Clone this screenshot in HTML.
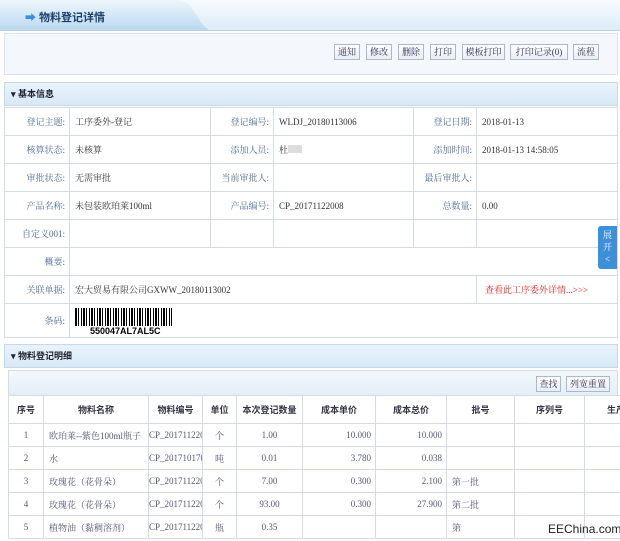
<!DOCTYPE html>
<html><head><meta charset="utf-8"><style>
*{margin:0;padding:0;box-sizing:border-box}
body{width:620px;height:541px;overflow:hidden;background:#fff;font-family:"Liberation Serif","Noto Serif CJK SC","Noto Sans CJK SC",serif;font-size:9px;color:#333;position:relative}
.abs{position:absolute}
.btn{position:absolute;top:44px;height:16px;border:1px solid #aab9cc;background:linear-gradient(#fff,#e8eef5);color:#335;font-size:9px;line-height:14px;text-align:center}
table{border-collapse:collapse;position:absolute}
td,th{border:1px solid #d3dce6;font-weight:normal}
.lbl{color:#4a6b95;text-align:right;padding-right:4px}
.val{padding-left:5px}
.sec{position:absolute;left:4px;width:614px;height:24px;background:linear-gradient(#e9f3fb,#d8e9f6);border:1px solid #c5d9ea;font-weight:bold;font-size:9px;color:#223;line-height:22px;padding-left:6px;font-family:"Liberation Sans","Noto Sans CJK SC",sans-serif}
.dt{table-layout:fixed}
.dt td,.dt th{white-space:nowrap;overflow:hidden}
.dt th{font-weight:bold;color:#334;height:28px;font-family:"Liberation Sans","Noto Sans CJK SC",sans-serif}
.dt td{height:23px;color:#557}
</style></head><body>
<div class="abs" style="left:0;top:0;width:620px;height:30px;background:linear-gradient(#f8fbfe,#dcecf8)"></div>
<svg class="abs" style="left:0;top:0" width="620" height="31"><defs><linearGradient id="g" x1="0" y1="0" x2="0" y2="1"><stop offset="0" stop-color="#eef6fc"/><stop offset="1" stop-color="#b9d8f0"/></linearGradient></defs><path d="M0 0H178C195 0 198 28 212 31H0Z" fill="url(#g)"/><line x1="0" y1="30.5" x2="620" y2="30.5" stroke="#b7d3ea"/></svg>
<div class="abs" style="left:25px;top:9px;font-weight:bold;font-size:11px;color:#1d3f6e;font-family:'Liberation Sans','Noto Sans CJK SC',sans-serif"><span style="color:#3a8ee0">➡</span> 物料登记详情</div>
<div class="abs" style="left:4px;top:33px;width:614px;height:42px;background:#f4f8fc;border:1px solid #d9e4ee"></div>
<div class="btn" style="left:334px;width:26px">通知</div>
<div class="btn" style="left:366px;width:26px">修改</div>
<div class="btn" style="left:398px;width:26px">删除</div>
<div class="btn" style="left:430px;width:26px">打印</div>
<div class="btn" style="left:462px;width:43px">模板打印</div>
<div class="btn" style="left:510px;width:58px">打印记录(0)</div>
<div class="btn" style="left:573px;width:26px">流程</div>
<div class="sec" style="top:82px">▾ 基本信息</div>
<table style="left:4px;top:107px;width:614px">
<tr style="height:28px"><td class="lbl" style="width:65px">登记主题:</td><td class="val" style="width:141px">工序委外-登记</td><td class="lbl" style="width:63px">登记编号:</td><td class="val" style="width:140px">WLDJ_20180113006</td><td class="lbl" style="width:63px">登记日期:</td><td class="val">2018-01-13</td></tr>
<tr style="height:28px"><td class="lbl">核算状态:</td><td class="val">未核算</td><td class="lbl">添加人员:</td><td class="val">杜<span style="display:inline-block;width:14px;height:8px;background:#ddd"></span></td><td class="lbl">添加时间:</td><td class="val">2018-01-13 14:58:05</td></tr>
<tr style="height:28px"><td class="lbl">审批状态:</td><td class="val">无需审批</td><td class="lbl">当前审批人:</td><td></td><td class="lbl">最后审批人:</td><td></td></tr>
<tr style="height:28px"><td class="lbl">产品名称:</td><td class="val">未包装欧珀莱100ml</td><td class="lbl">产品编号:</td><td class="val">CP_20171122008</td><td class="lbl">总数量:</td><td class="val">0.00</td></tr>
<tr style="height:28px"><td class="lbl">自定义001:</td><td></td><td></td><td></td><td></td><td></td></tr>
<tr style="height:28px"><td class="lbl">概要:</td><td colspan="5"></td></tr>
<tr style="height:28px"><td class="lbl">关联单据:</td><td colspan="4" class="val">宏大贸易有限公司GXWW_20180113002</td><td style="color:#e02020;padding-left:8px;font-size:9px">查看此工序委外详情...&gt;&gt;&gt;</td></tr>
<tr style="height:34px"><td class="lbl">条码:</td><td colspan="5" class="val"><div style="width:97px;height:18px;margin-top:2px;background:repeating-linear-gradient(90deg,#000 0 2px,#fff 2px 3px,#000 3px 4px,#fff 4px 6px,#000 6px 7px,#fff 7px 8px)"></div><div style="font:bold 9px 'Liberation Sans',sans-serif;color:#000;padding-left:15px;line-height:10px">550047AL7AL5C</div></td></tr>
</table>
<div class="abs" style="left:598px;top:226px;width:19px;height:43px;background:#3c8fd8;border-radius:3px 0 0 3px;color:#fff;font-size:9px;text-align:center;line-height:12px;padding-top:3px">展<br>开<br>&lt;</div>
<div class="sec" style="top:344px">▾ 物料登记明细</div>
<div class="abs" style="left:8px;top:370px;width:610px;height:26px;background:linear-gradient(#f3f8fc,#e4eef7);border:1px solid #d3dce6"></div>
<div class="btn" style="top:376px;left:536px;width:25px">查找</div>
<div class="btn" style="top:376px;left:566px;width:44px">列宽重置</div>
<table class="dt" style="left:8px;top:395px;width:640px">
<tr><th style="width:35px">序号</th><th style="width:105px">物料名称</th><th style="width:54px">物料编号</th><th style="width:34px">单位</th><th style="width:66px">本次登记数量</th><th style="width:73px">成本单价</th><th style="width:71px">成本总价</th><th style="width:68px">批号</th><th style="width:70px">序列号</th><th>生产</th></tr>
<tr><td style="text-align:center">1</td><td class="val">欧珀莱--紫色100ml瓶子</td><td>CP_2017112200</td><td style="text-align:center">个</td><td style="text-align:center">1.00</td><td style="text-align:right;padding-right:4px">10.000</td><td style="text-align:right;padding-right:4px">10.000</td><td></td><td></td><td></td></tr>
<tr><td style="text-align:center">2</td><td class="val">水</td><td>CP_2017101700</td><td style="text-align:center">吨</td><td style="text-align:center">0.01</td><td style="text-align:right;padding-right:4px">3.780</td><td style="text-align:right;padding-right:4px">0.038</td><td></td><td></td><td></td></tr>
<tr><td style="text-align:center">3</td><td class="val">玫瑰花（花骨朵）</td><td>CP_2017112200</td><td style="text-align:center">个</td><td style="text-align:center">7.00</td><td style="text-align:right;padding-right:4px">0.300</td><td style="text-align:right;padding-right:4px">2.100</td><td class="val">第一批</td><td></td><td></td></tr>
<tr><td style="text-align:center">4</td><td class="val">玫瑰花（花骨朵）</td><td>CP_2017112200</td><td style="text-align:center">个</td><td style="text-align:center">93.00</td><td style="text-align:right;padding-right:4px">0.300</td><td style="text-align:right;padding-right:4px">27.900</td><td class="val">第二批</td><td></td><td></td></tr>
<tr><td style="text-align:center">5</td><td class="val">植物油（黏稠溶剂）</td><td>CP_2017112200</td><td style="text-align:center">瓶</td><td style="text-align:center">0.35</td><td></td><td></td><td class="val">第</td><td></td><td></td></tr>
</table>
<div class="abs" style="left:548px;top:522px;font:12px 'Liberation Sans',sans-serif;color:#222">EEChina.com</div>
</body></html>
